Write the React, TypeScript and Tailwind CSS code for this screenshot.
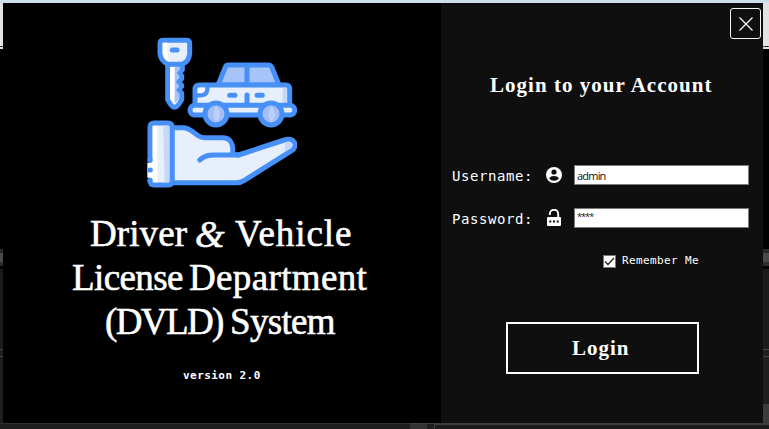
import React from "react";

function EdgeStrip({ side }: { side: "left" | "right" }) {
  return (
    <div className={side === "left" ? "flex w-[3px] flex-col" : "flex w-[6px] flex-col"}>
      <div className="h-[43px] bg-[#e2e2e2]" />
      <div className="h-px border-t border-dotted border-[#555]" />
      <div className="h-[2px] bg-[#e2e2e2]" />
      <div className="h-[200px] bg-black" />
      <div className="h-[4px] bg-[#2a2a2a]" />
      <div className="h-[9px] bg-[#4a4a4a]" />
      <div className="h-[4px] bg-[#2e2e2e]" />
      <div className="h-[3px] bg-black" />
      <div className="h-[80px] bg-[#1b1b1b]" />
      <div className="h-px bg-[#444]" />
      <div className="h-[6px] bg-[#1f1f1f]" />
      <div className="h-px bg-[#444]" />
      <div className="h-[47px] bg-[#1f1f1f]" />
      <div className={side === "left" ? "flex-1 bg-[#1f1f1f]" : "flex-1 bg-[#3c3c3c]"} />
    </div>
  );
}

function Logo() {
  return (
    <svg
      viewBox="50 22 452 453"
      className="ml-[143.5px] mt-[34px] h-[151px] w-[150.7px] shrink-0"
      fill="none"
      stroke="#4790f8"
      strokeWidth="15"
      strokeLinejoin="round"
      strokeLinecap="round"
    >
      {/* key */}
      <path d="M112 102V210Q124 233 132 233Q142 233 154 210V190L144 181L154 170V167L144 157L154 147V138L147 129L156 120V102Z" fill="#e7eefc" />
      <path d="M134 111H149V119L140 129L147 140L137 157L147 169L137 181L147 192V207L134 220Z" fill="#a6c4f8" stroke="none" />
      <path d="M119 111H131V222L119 207Z" fill="#fff" stroke="none" />
      <path d="M99 32H168Q178 32 178 42V72Q176 94 156 104H112Q92 94 89 73V42Q89 32 99 32Z" fill="#e7eefc" />
      <path d="M97 39H111V68Q112 88 122 96Q98 91 97 70Z" fill="#fff" stroke="none" />
      <path d="M126 61H140" />
      {/* car */}
      <path d="M263 166L286 110Q288 106 294 106H414Q421 106 425 114L446 166Z" fill="#a6c4f8" />
      <path d="M350 108V164" />
      <path d="M194 230V180Q194 166 208 166H466Q478 166 478 180V230Z" fill="#e7eefc" />
      <path d="M457 174H470V222H457Z" fill="#c5d8fa" stroke="none" />
      <path d="M202 174H224V181Q222 191 211 191H202Z" fill="#fff" stroke="none" />
      <path d="M198 197H211Q231 196 231 177V172" strokeWidth="13" />
      <rect x="179" y="227" width="314" height="29" rx="14" fill="#e7eefc" />
      <path d="M298 197H314M380 197H396M350 196V225" />
      <circle cx="257" cy="253" r="33" fill="#a4bff7" />
      <circle cx="422" cy="253" r="33" fill="#a4bff7" />
      <path d="M257 228Q242 253 257 278Q281 253 257 228ZM422 228Q407 253 422 278Q446 253 422 228Z" fill="#bccffa" stroke="none" />
      {/* hand */}
      <path d="M125 294H158C188 294 195 324 222 324H277C298 324 312 342 306 374L325 376L462 331C489 321 506 347 484 363L342 452Q332 459 317 459H125Z" fill="#e7eefc" />
      <path d="M208 391C225 377 235 376 253 376H325" />
      <path d="M464 346V338Q483 331 486 344Q486 355 473 361L461 368Q464 358 464 346Z" fill="#c5d8fa" stroke="none" />
      {/* sleeve */}
      <path d="M59 392V292Q59 280 72 280H113Q125 280 125 292V453Q125 466 113 466H72Q59 466 59 452" fill="#e7eefc" />
      <path d="M67 288H81V458H67V444H51V399H67Z" fill="#fff" stroke="none" />
      <path d="M99 288H117V458H103Z" fill="#c5d8fa" stroke="none" />
      <path d="M59 421H60" />
      <path d="M59 392V388M59 452V454" />
    </svg>
  );
}

function UserIcon() {
  return (
    <svg viewBox="0 0 16 16" className="h-4 w-4">
      <circle cx="8" cy="8" r="8" fill="#fff" />
      <circle cx="8" cy="5" r="2.6" fill="#0f0f0f" />
      <path d="M3 11.2Q4.5 8.9 8 8.9T13 11.2Q11.1 13.8 8 13.8T3 11.2Z" fill="#0f0f0f" />
    </svg>
  );
}

function LockIcon() {
  return (
    <svg viewBox="0 0 16 18" className="h-[18px] w-4">
      <path d="M3.8 6V5a4.2 4.2 0 0 1 8.4 0v3" fill="none" stroke="#fff" strokeWidth="1.9" />
      <rect x="1" y="8" width="14" height="9" rx="1" fill="#fff" />
      <path d="M3.3 11.6h2v2h-2zM7 11.6h2v2H7zM10.7 11.6h2v2h-2z" fill="#0f0f0f" />
    </svg>
  );
}

const mono = "font-['DejaVu_Sans_Mono',monospace]";
const title = "flex h-11 items-center whitespace-nowrap text-[37px] leading-[44px] [-webkit-text-stroke:0.6px_white]";

export default function App() {
  return (
    <div className="flex h-[429px] w-[769px] flex-col overflow-hidden bg-black text-white">
      <div className="h-[3px] shrink-0 bg-[#cfe0eb]" />
      <div className="flex h-[420px] shrink-0">
        <EdgeStrip side="left" />
        <section className="flex w-[438px] flex-col bg-black">
          <Logo />
          <h1 className="mt-[24px] font-['Liberation_Serif',serif] font-normal">
            <span className={`${title} pl-[87px]`}>
              <span className="w-[105px] tracking-[0.1px]">Driver</span>{" "}
              <span className="w-[40px] text-[38px] italic">&amp;</span>{" "}
              <span className="tracking-[0.9px]">Vehicle</span>
            </span>
            <span className={`${title} pl-[69px]`}>
              <span className="w-[117px] tracking-[-0.6px]">License</span>{" "}
              <span className="tracking-[0.35px]">Department</span>
            </span>
            <span className={`${title} pl-[102px]`}>
              <span className="w-[125px] tracking-[-1.6px]">(DVLD)</span>{" "}
              <span className="tracking-[-0.7px]">System</span>
            </span>
          </h1>
          <p className={`${mono} ml-[180px] mt-[24px] text-[11px] font-bold leading-4 tracking-[0.44px]`}>version 2.0</p>
        </section>
        <section className="flex w-[322px] flex-col bg-[#0f0f0f]">
          <button className="ml-[289px] mt-[5px] flex h-[31px] w-[31px] shrink-0 items-center justify-center rounded-[3px] border border-[#f4f4f4]">
            <svg viewBox="0 0 14 14" className="h-[14px] w-[14px]">
              <path d="M.5.5l13 13M13.5.5l-13 13" stroke="#fff" strokeWidth="1.2" />
            </svg>
          </button>
          <h2 className="ml-[49px] mt-[34px] whitespace-nowrap font-['Liberation_Serif',serif] text-[21px] font-bold leading-6 tracking-[1.03px]">
            Login to your Account
          </h2>
          <div className="ml-[11px] mt-[68px] flex h-5 items-center">
            <label className={`${mono} w-[94px] pt-px text-[14px] leading-5 tracking-[0.58px]`}>Username:</label>
            <UserIcon />
            <input
              defaultValue="admin"
              className="ml-3 h-5 w-[175px] border border-[#7a7a7a] bg-white px-[2px] font-['Open_Sans',sans-serif] text-[11px] tracking-[-0.8px] text-[#101018]"
            />
          </div>
          <div className="ml-[11px] mt-[23px] flex h-5 items-center">
            <label className={`${mono} w-[94px] pt-px text-[14px] leading-5 tracking-[0.58px]`}>Password:</label>
            <LockIcon />
            <input
              defaultValue="****"
              className="ml-3 h-5 w-[175px] border border-[#7a7a7a] bg-white px-[2px] pb-1 font-['Open_Sans',sans-serif] text-[9px] tracking-[-0.9px] text-[#101018]"
            />
          </div>
          <label className="ml-[162px] mt-[25px] flex h-4 items-center">
            <span className="flex h-[13px] w-[13px] items-center justify-center border border-[#777] bg-white">
              <svg viewBox="0 0 11 11" className="h-[11px] w-[11px]">
                <path d="M1 5.5l3 3 6-6.5" fill="none" stroke="#222" strokeWidth="1.3" />
              </svg>
            </span>
            <span className={`${mono} ml-[6px] text-[11px] leading-4 tracking-[0.38px]`}>Remember Me</span>
          </label>
          <button className="ml-[65px] mt-[53px] flex h-[52px] w-[193px] items-center border-2 border-white pl-[64px] font-['Liberation_Serif',serif] text-[21px] font-bold leading-none tracking-[1px]">
            Login
          </button>
        </section>
        <EdgeStrip side="right" />
      </div>
      <div className="flex h-[6px] shrink-0">
        <div className="w-[410px] border-t border-[#303030] bg-[#1e1e1e]" />
        <div className="w-[17px] border-t border-[#404040] bg-[#333]" />
        <div className="w-[7px] border-t border-[#404040] bg-[#1e1e1e]" />
        <div className="flex-1 border-l border-t-2 border-[#3e3e3e] bg-[#1c1a1a]" />
      </div>
    </div>
  );
}
